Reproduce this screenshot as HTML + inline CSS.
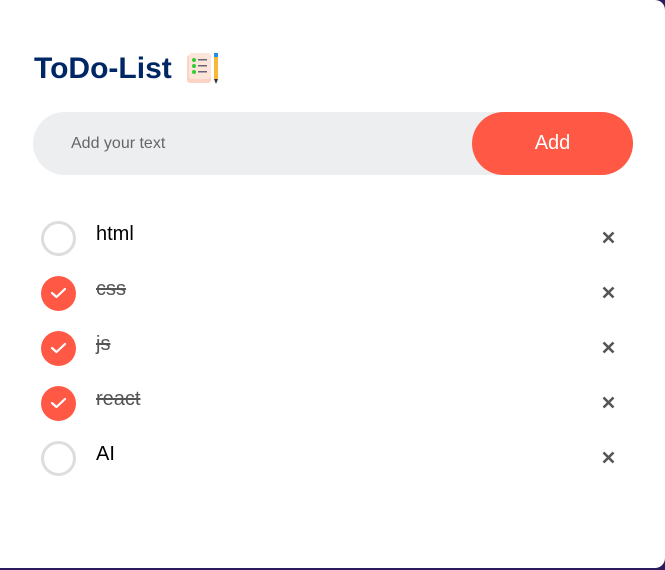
<!DOCTYPE html>
<html><head><meta charset="utf-8"><style>
*{margin:0;padding:0;box-sizing:border-box}
html,body{width:665px;height:570px;overflow:hidden;background:#2b1a5e;font-family:"Liberation Sans",Arial,sans-serif}
.card{position:absolute;left:0;top:0;width:665px;height:568px;background:#fff;border-radius:0 10px 10px 0}
h2{position:absolute;left:34px;top:52px;font-size:30px;font-weight:bold;color:#002765;display:flex;align-items:center}
.emo{margin-left:14px;width:34px;height:32px;position:relative}
.row{position:absolute;left:33px;top:112px;width:600px;height:63px;background:#edeef0;border-radius:32px}
.row span{position:absolute;left:38px;top:23px;font-size:16px;color:#666}
.btn{position:absolute;right:0;top:0;width:161px;height:63px;background:#ff5945;border-radius:32px;color:#fff;font-size:20px;text-align:center;line-height:63px}
.li{position:absolute;left:0;width:665px;height:40px}
.c{position:absolute;left:41px;top:1px;width:35px;height:35px;border-radius:50%;border:3px solid #ddd}
.c.on{background:#ff5945;border:none}
.c.on svg{position:absolute;left:9px;top:10px}
.t{position:absolute;left:96px;top:3px;font-size:20px;color:#000}
.t.d{color:#555;text-decoration:line-through}
.x{position:absolute;left:602px;top:11px}
</style></head><body>
<div class="card">
<h2>ToDo-List<span class="emo"><svg width="34" height="32" viewBox="0 0 34 32"><rect x="1" y="2" width="24" height="28" rx="3" fill="#fcd3c4"/><rect x="3" y="0" width="22" height="26" rx="3" fill="#fde5da"/><circle cx="8" cy="7" r="2" fill="#3c3"/><circle cx="8" cy="13" r="2" fill="#3c3"/><circle cx="8" cy="19" r="2" fill="#3c3"/><rect x="12" y="6" width="9" height="1.5" fill="#667"/><rect x="12" y="12" width="9" height="1.5" fill="#667"/><rect x="12" y="18" width="9" height="1.5" fill="#667"/><rect x="28" y="0" width="4" height="4" fill="#2a8ce0"/><rect x="28" y="4" width="4" height="22" fill="#f8b83c"/><path d="M28 26 L32 26 L30 31Z" fill="#333"/></svg></span></h2>
<div class="row"><span>Add your text</span><div class="btn">Add</div></div>

<div class="li" style="top:220px"><div class="c"></div><div class="t">html</div><svg class="x" width="13" height="13"><path d="M1.5 1.5L11.5 11.5M11.5 1.5L1.5 11.5" stroke="#555" stroke-width="2.6"/></svg></div>
<div class="li" style="top:275px"><div class="c on"><svg width="17" height="14" viewBox="0 0 17 14"><path d="M2 7 L6.5 11 L15 3" stroke="#fff" stroke-width="2.2" fill="none" stroke-linecap="round" stroke-linejoin="round"/></svg></div><div class="t d">css</div><svg class="x" width="13" height="13"><path d="M1.5 1.5L11.5 11.5M11.5 1.5L1.5 11.5" stroke="#555" stroke-width="2.6"/></svg></div>
<div class="li" style="top:330px"><div class="c on"><svg width="17" height="14" viewBox="0 0 17 14"><path d="M2 7 L6.5 11 L15 3" stroke="#fff" stroke-width="2.2" fill="none" stroke-linecap="round" stroke-linejoin="round"/></svg></div><div class="t d">js</div><svg class="x" width="13" height="13"><path d="M1.5 1.5L11.5 11.5M11.5 1.5L1.5 11.5" stroke="#555" stroke-width="2.6"/></svg></div>
<div class="li" style="top:385px"><div class="c on"><svg width="17" height="14" viewBox="0 0 17 14"><path d="M2 7 L6.5 11 L15 3" stroke="#fff" stroke-width="2.2" fill="none" stroke-linecap="round" stroke-linejoin="round"/></svg></div><div class="t d">react</div><svg class="x" width="13" height="13"><path d="M1.5 1.5L11.5 11.5M11.5 1.5L1.5 11.5" stroke="#555" stroke-width="2.6"/></svg></div>
<div class="li" style="top:440px"><div class="c"></div><div class="t">AI</div><svg class="x" width="13" height="13"><path d="M1.5 1.5L11.5 11.5M11.5 1.5L1.5 11.5" stroke="#555" stroke-width="2.6"/></svg></div>
</div>
</body></html>
